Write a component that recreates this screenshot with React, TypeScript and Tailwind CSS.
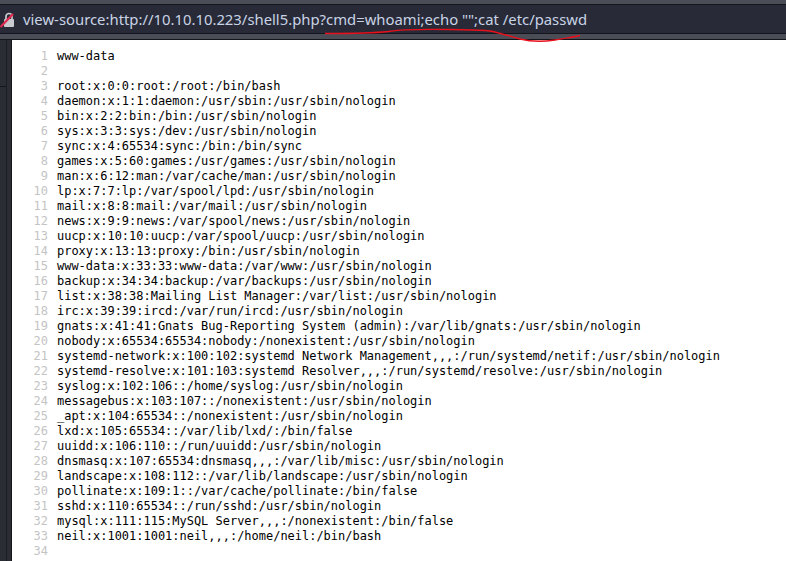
const lines = [
  'www-data',
  '',
  'root:x:0:0:root:/root:/bin/bash',
  'daemon:x:1:1:daemon:/usr/sbin:/usr/sbin/nologin',
  'bin:x:2:2:bin:/bin:/usr/sbin/nologin',
  'sys:x:3:3:sys:/dev:/usr/sbin/nologin',
  'sync:x:4:65534:sync:/bin:/bin/sync',
  'games:x:5:60:games:/usr/games:/usr/sbin/nologin',
  'man:x:6:12:man:/var/cache/man:/usr/sbin/nologin',
  'lp:x:7:7:lp:/var/spool/lpd:/usr/sbin/nologin',
  'mail:x:8:8:mail:/var/mail:/usr/sbin/nologin',
  'news:x:9:9:news:/var/spool/news:/usr/sbin/nologin',
  'uucp:x:10:10:uucp:/var/spool/uucp:/usr/sbin/nologin',
  'proxy:x:13:13:proxy:/bin:/usr/sbin/nologin',
  'www-data:x:33:33:www-data:/var/www:/usr/sbin/nologin',
  'backup:x:34:34:backup:/var/backups:/usr/sbin/nologin',
  'list:x:38:38:Mailing List Manager:/var/list:/usr/sbin/nologin',
  'irc:x:39:39:ircd:/var/run/ircd:/usr/sbin/nologin',
  'gnats:x:41:41:Gnats Bug-Reporting System (admin):/var/lib/gnats:/usr/sbin/nologin',
  'nobody:x:65534:65534:nobody:/nonexistent:/usr/sbin/nologin',
  'systemd-network:x:100:102:systemd Network Management,,,:/run/systemd/netif:/usr/sbin/nologin',
  'systemd-resolve:x:101:103:systemd Resolver,,,:/run/systemd/resolve:/usr/sbin/nologin',
  'syslog:x:102:106::/home/syslog:/usr/sbin/nologin',
  'messagebus:x:103:107::/nonexistent:/usr/sbin/nologin',
  '_apt:x:104:65534::/nonexistent:/usr/sbin/nologin',
  'lxd:x:105:65534::/var/lib/lxd/:/bin/false',
  'uuidd:x:106:110::/run/uuidd:/usr/sbin/nologin',
  'dnsmasq:x:107:65534:dnsmasq,,,:/var/lib/misc:/usr/sbin/nologin',
  'landscape:x:108:112::/var/lib/landscape:/usr/sbin/nologin',
  'pollinate:x:109:1::/var/cache/pollinate:/bin/false',
  'sshd:x:110:65534::/run/sshd:/usr/sbin/nologin',
  'mysql:x:111:115:MySQL Server,,,:/nonexistent:/bin/false',
  'neil:x:1001:1001:neil,,,:/home/neil:/bin/bash',
  '',
]

export default function App() {
  return (
    <div className="relative flex h-[561px] w-[786px] flex-col overflow-hidden bg-white">
      <div className="h-[5px] border-b border-[#15161b] bg-[#4a4d55]" />
      <div className="flex h-[29px] items-center gap-[6px] border-b border-[#15161b] bg-[#282b37] font-['Noto_Sans',sans-serif] text-[14.85px] text-[#c8d3e6]">
        <svg className="shrink-0" width="17" height="17" viewBox="0 0 17 17" fill="none">
          <rect x="4" y="8" width="10" height="8" rx="1" fill="#c9cbd0" />
          <path d="M6 8.5V5.5a3 3 0 0 1 6 0V8.5" stroke="#c9cbd0" strokeWidth="1.7" />
          <path d="M0.5 16L13 3" stroke="#e22850" strokeWidth="2.2" />
        </svg>
        <span>view-source:http://10.10.10.223/shell5.php?cmd=whoami;echo "";cat /etc/passwd</span>
      </div>
      <div className="h-[6px] border-b border-[#15161b] bg-[#4a4d55]" />
      <div className="flex min-h-0 flex-1">
        <div className="flex w-[12px] border-r border-[#15161b] bg-[#2b2d35]">
          <div className="w-[7px] border-r border-[#1d1e24]">
            <div className="h-[47px] border-b border-[#15161b]" />
          </div>
        </div>
        <div className="flex-1 pl-[8px] pt-[9px] font-['DejaVu_Sans_Mono',monospace] text-[11.98px] leading-[15px] text-black">
          {lines.map((line, i) => (
            <div key={i} className="flex h-[15px]">
              <span className="w-[37px] shrink-0 pr-[9px] text-right text-[#c4c4c4]">{i + 1}</span>
              <span className="whitespace-pre">{line}</span>
            </div>
          ))}
        </div>
      </div>
      {/* red marker scribble over the address bar */}
      <svg className="absolute left-0 top-0" width="786" height="60" fill="none">
        <path
          d="M325 33.5C350 33.5 375 33 388 31.5C400 29.5 420 29 450 29.5C470 30 480 30 490 31C500 33 510 36 520 39C530 41.5 545 41.5 555 40C565 38 575 37 580 35.5"
          stroke="#e8101c"
          strokeWidth="1.4"
        />
      </svg>
    </div>
  )
}
